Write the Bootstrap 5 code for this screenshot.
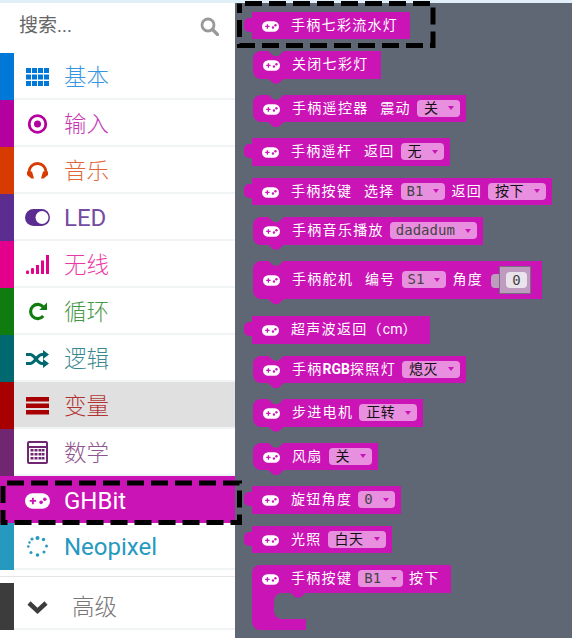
<!DOCTYPE html>
<html lang="zh">
<head>
  <meta charset="UTF-8">
  <title>GHBit toolbox</title>
  <link href="https://cdn.jsdelivr.net/npm/bootstrap@5.3.2/dist/css/bootstrap.min.css" rel="stylesheet">
  <style>
    html,body{height:100%}
    body{width:572px;height:638px;overflow:hidden;position:relative;background:#fff;font-family:Roboto,"Noto Sans CJK SC",sans-serif}
    .top-strip{height:3px;background:#e1f0f8}
    .side-pane{width:235px;flex:none;background:#fff}
    .search-box{height:50px;padding:0 16px 3px 19px;font-size:19px;color:#666}
    .cat-row{height:47px}
    .cat-bar{width:14px;flex:none}
    .cat-body{padding-left:12px;padding-top:2px;gap:15px;border-bottom:2px solid #f1f4f4;font-size:22.5px;line-height:1;font-weight:300}
    .cat-icon{width:23px;flex:none;display:block;overflow:visible}
    .cat-selected{background:#e0e0e0}
    .cat-active{background:#cb14b6;color:#fff}
    .cat-active .cat-body{border-bottom:0}
    .side-rule{border-bottom:1px solid #e3e6e6;margin-bottom:6px;height:7px}
    .adv-label{margin-left:8px;color:#777;padding-top:1px}
    .tint-basic{color:#0078d7}.tint-input{color:#b4009e}.tint-music{color:#d83b01}.tint-led{color:#5c2d91}
    .tint-radio{color:#e3008c}.tint-loop{color:#107c10}.tint-logic{color:#006970}.tint-var{color:#a80000}
    .tint-math{color:#712672}.tint-neo{color:#2699bf}.tint-adv{color:#3c3c3c}
    .fill-basic{background:#0078d7}.fill-input{background:#b4009e}.fill-music{background:#d83b01}.fill-led{background:#5c2d91}
    .fill-radio{background:#e3008c}.fill-loop{background:#107c10}.fill-logic{background:#006970}.fill-var{background:#a80000}
    .fill-math{background:#712672}.fill-neo{background:#2699bf}.fill-adv{background:#3c3c3c}
    .cat-text{opacity:.78;padding-top:2px}
    .cat-latin{font-size:24px;font-weight:400;padding-top:1px}
    .cat-led{opacity:.85}

    .fly-pane{background:#5f6775;padding:8.5px 0 0 17px;flex:1 1 auto;font-size:14px;color:#fff}
    .blk{position:relative;height:27.5px;background:#cb14b6;padding:0 12px 0 10px;gap:6px;white-space:nowrap}
    .blk-out{margin-bottom:12px}
    .blk-stmt{margin-bottom:16px;margin-left:1px;border-radius:8px 0 0 8px}
    .blk-tall{height:38.5px;margin-bottom:17px}
    .blk-out::before{content:"";position:absolute;left:-8px;top:6px;width:8px;height:14px;background:#cb14b6;border-radius:5px 0 0 5px}
    .blk-stmt::before{content:"";position:absolute;left:15px;top:0;width:16px;height:5px;background:#5f6775;clip-path:polygon(0 0,100% 0,65% 100%,35% 100%)}
    .blk-stmt::after{content:"";position:absolute;left:15px;top:100%;width:16px;height:5px;background:#cb14b6;clip-path:polygon(0 0,100% 0,65% 100%,35% 100%)}
    .blk-pad{width:17px;height:11px;flex:none;margin:2px 6px 0 0}
    .blk-label{letter-spacing:1.3px;word-spacing:7px}
    .blk-tight{letter-spacing:0}
    .blk-end{padding-right:6px}
    .fld{height:17px;background:#e98fdf;border-radius:4px;padding:0 5px 0 7px;color:#111;letter-spacing:.5px;line-height:17px}
    .fld-mono{padding-left:6px;color:#444;letter-spacing:0;font-family:"DejaVu Sans Mono","Noto Sans CJK SC",monospace}
    .fld-arrow{width:0;height:0;margin:0 1px 0 10px;border-left:3px solid transparent;border-right:3px solid transparent;border-top:4px solid #cb14b6;flex:none}
    .num-slot{position:relative;width:32px;height:28px;background:#bd9cc0;border:1px solid #77707c;padding:5px 3px 5px 6px;margin-left:10px}
    .num-slot::before{content:"";position:absolute;left:-9px;top:7px;width:8px;height:14px;background:#bd9cc0;border-radius:4px 0 0 4px}
    .num-val{height:100%;border-radius:4px;background:#ebe3ec;color:#444;font:14px/16px "DejaVu Sans Mono",monospace;text-align:center}
    .blk-cwrap{width:199px}
    .blk-chead{border-radius:8px 0 0 0}
    .blk-jaw{width:54px;height:37px;background:#cb14b6;border-radius:0 0 0 8px}
    .blk-mouth{position:relative;margin-left:22px;height:26px;background:#5f6775;border-radius:8px 0 0 8px}
    .blk-mouth::before{content:"";position:absolute;right:0;top:0;width:16px;height:5px;background:#cb14b6;clip-path:polygon(0 0,100% 0,65% 100%,35% 100%)}

    .dash-layer{position:absolute;left:0;top:0;pointer-events:none}
    .dash-line{fill:none;stroke:#000;stroke-width:5;stroke-dasharray:17 7}
  </style>
</head>
<body>

<svg width="0" height="0" class="position-absolute">
  <symbol id="pad" viewBox="0 0 24 15">
    <rect x="0" y="0" width="24" height="15" rx="7.5" fill="#fff"/>
    <path d="M4.5 6.5h2.2v-2.2h1.8v2.2h2.2v1.8h-2.2v2.2h-1.8v-2.2h-2.200z" fill="#cb14b6"/>
    <circle cx="15.500" cy="8.800" r="1.700" fill="#cb14b6"/>
    <circle cx="19" cy="5.800" r="1.700" fill="#cb14b6"/>
  </symbol>
</svg>

<div class="top-strip"></div>
<div class="d-flex" style="height:635px">
  <!-- categories -->
  <div class="side-pane d-flex flex-column">
    <div class="search-box d-flex align-items-center justify-content-between">
      <span>搜索...</span>
      <svg width="19" height="19" viewBox="0 0 19 19"><circle cx="8" cy="8" r="6" fill="none" stroke="#999" stroke-width="2.800"/><path d="M12.500 12.500l5 5" stroke="#999" stroke-width="3.200" stroke-linecap="round"/></svg>
    </div>

    <div class="cat-row d-flex">
      <div class="cat-bar fill-basic"></div>
      <div class="cat-body d-flex flex-grow-1 align-items-center tint-basic">
        <svg class="cat-icon" height="18" viewBox="0 0 23 18" fill="currentColor">
          <rect x="0" y="0" width="5" height="5"/><rect x="6" y="0" width="5" height="5"/><rect x="12" y="0" width="5" height="5"/><rect x="18" y="0" width="5" height="5"/>
          <rect x="0" y="6.500" width="5" height="5"/><rect x="6" y="6.500" width="5" height="5"/><rect x="12" y="6.500" width="5" height="5"/><rect x="18" y="6.500" width="5" height="5"/>
          <rect x="0" y="13" width="5" height="5"/><rect x="6" y="13" width="5" height="5"/><rect x="12" y="13" width="5" height="5"/><rect x="18" y="13" width="5" height="5"/>
        </svg>
        <span class="cat-text">基本</span>
      </div>
    </div>
    <div class="cat-row d-flex">
      <div class="cat-bar fill-input"></div>
      <div class="cat-body d-flex flex-grow-1 align-items-center tint-input">
        <svg class="cat-icon" height="20" viewBox="0 0 23 20" fill="currentColor">
          <circle cx="11.500" cy="10" r="8.300" fill="none" stroke="currentColor" stroke-width="2.800"/><circle cx="11.500" cy="10" r="3.500"/>
        </svg>
        <span class="cat-text">输入</span>
      </div>
    </div>
    <div class="cat-row d-flex">
      <div class="cat-bar fill-music"></div>
      <div class="cat-body d-flex flex-grow-1 align-items-center tint-music">
        <svg class="cat-icon" height="16" viewBox="0 0 23 16" fill="currentColor">
          <path d="M3 12v-3a8.500 8.500 0 0 1 17 0v3" fill="none" stroke="currentColor" stroke-width="2.800"/>
          <path d="M1 8.500h5l2 7h-2.500l-4.500-3.500zM22 8.500h-5l-2 7h2.500l4.500-3.500z"/>
        </svg>
        <span class="cat-text">音乐</span>
      </div>
    </div>
    <div class="cat-row d-flex">
      <div class="cat-bar fill-led"></div>
      <div class="cat-body d-flex flex-grow-1 align-items-center tint-led">
        <svg class="cat-icon" height="17" viewBox="0 0 25 17" fill="currentColor" style="margin-left:-1px;width:25px;margin-right:-1px">
          <rect x="0" y="0" width="25" height="17" rx="8.500"/><circle cx="17" cy="8.500" r="6.500" fill="#fff"/>
        </svg>
        <span class="cat-latin cat-led">LED</span>
      </div>
    </div>
    <div class="cat-row d-flex">
      <div class="cat-bar fill-radio"></div>
      <div class="cat-body d-flex flex-grow-1 align-items-center tint-radio">
        <svg class="cat-icon" height="19" viewBox="0 0 23 19" fill="currentColor">
          <rect x="0" y="15.500" width="3" height="3.500" rx="1"/><rect x="5" y="13" width="3" height="6" rx="1"/><rect x="10" y="10" width="3" height="9"/><rect x="15" y="5.500" width="3" height="13.500"/><rect x="20" y="0" width="3" height="19"/>
        </svg>
        <span class="cat-text">无线</span>
      </div>
    </div>
    <div class="cat-row d-flex">
      <div class="cat-bar fill-loop"></div>
      <div class="cat-body d-flex flex-grow-1 align-items-center tint-loop">
        <svg class="cat-icon" height="19" viewBox="0 0 23 20" fill="currentColor">
          <path d="M17.500 5.200a7.500 7.500 0 1 0 0 9.600" fill="none" stroke="currentColor" stroke-width="3.300"/>
          <path d="M21.500 0.500v8h-8z"/>
        </svg>
        <span class="cat-text">循环</span>
      </div>
    </div>
    <div class="cat-row d-flex">
      <div class="cat-bar fill-logic"></div>
      <div class="cat-body d-flex flex-grow-1 align-items-center tint-logic">
        <svg class="cat-icon" height="18" viewBox="0 0 23 18" fill="currentColor">
          <path d="M0 4.500h4c5 0 7 9 12 9h2M0 13.500h4c5 0 7-9 12-9h2" fill="none" stroke="currentColor" stroke-width="3"/>
          <path d="M17 0l6 4.500-6 4.500zM17 9l6 4.500-6 4.500z"/>
        </svg>
        <span class="cat-text">逻辑</span>
      </div>
    </div>
    <div class="cat-row d-flex cat-selected">
      <div class="cat-bar fill-var"></div>
      <div class="cat-body d-flex flex-grow-1 align-items-center tint-var">
        <svg class="cat-icon" height="18" viewBox="0 0 23 18" fill="currentColor">
          <rect x="0" y="0" width="23" height="4.500"/><rect x="0" y="6.500" width="23" height="4.500"/><rect x="0" y="13" width="23" height="4.500"/>
        </svg>
        <span class="cat-text">变量</span>
      </div>
    </div>
    <div class="cat-row d-flex">
      <div class="cat-bar fill-math"></div>
      <div class="cat-body d-flex flex-grow-1 align-items-center tint-math">
        <svg class="cat-icon" height="23" viewBox="0 0 23 23" fill="currentColor">
          <path fill-rule="evenodd" d="M3 0h17a2 2 0 0 1 2 2v19a2 2 0 0 1-2 2h-17a2 2 0 0 1-2-2v-19a2 2 0 0 1 2-2zM3 2v3h17v-3zM3 7v14h17v-14z"/>
          <rect x="4.500" y="8" width="3" height="2.500"/><rect x="8.500" y="8" width="3" height="2.500"/><rect x="12.500" y="8" width="3" height="2.500"/><rect x="16" y="8" width="2.500" height="2.500"/>
          <rect x="4.500" y="12" width="3" height="2.500"/><rect x="8.500" y="12" width="3" height="2.500"/><rect x="12.500" y="12" width="3" height="2.500"/><rect x="16" y="12" width="2.500" height="2.500"/>
          <rect x="4.500" y="16" width="3" height="2.500"/><rect x="8.500" y="16" width="3" height="2.500"/><rect x="12.500" y="16" width="3" height="2.500"/><rect x="16" y="16" width="2.500" height="2.500"/>
        </svg>
        <span class="cat-text">数学</span>
      </div>
    </div>
    <div class="cat-row d-flex cat-active">
      <div class="cat-bar"></div>
      <div class="cat-body d-flex flex-grow-1 align-items-center">
        <svg class="cat-icon" height="16" style="margin-left:-1px;width:25px;margin-right:-1px"><use href="#pad"/></svg>
        <span class="cat-latin">GHBit</span>
      </div>
    </div>
    <div class="cat-row d-flex">
      <div class="cat-bar fill-neo"></div>
      <div class="cat-body d-flex flex-grow-1 align-items-center tint-neo">
        <svg class="cat-icon" height="21" viewBox="0 0 23 21" fill="currentColor">
          <circle cx="11.500" cy="2" r="2"/><circle cx="17.500" cy="3.500" r="1.700"/><circle cx="20.500" cy="10" r="1.500"/><circle cx="18" cy="16" r="1.500"/><circle cx="11.500" cy="19" r="1.800"/><circle cx="5" cy="16.500" r="1.500"/><circle cx="2.300" cy="10.500" r="1.300"/><circle cx="3.500" cy="6.500" r="1.200"/><circle cx="6" cy="3" r="1.600"/>
        </svg>
        <span class="cat-latin">Neopixel</span>
      </div>
    </div>
    <div class="side-rule"></div>
    <div class="cat-row d-flex">
      <div class="cat-bar fill-adv"></div>
      <div class="cat-body d-flex flex-grow-1 align-items-center tint-adv">
        <svg class="cat-icon" height="14" viewBox="0 0 23 14"><path d="M3 3l8.500 8 8.500-8" fill="none" stroke="currentColor" stroke-width="4.500"/></svg>
        <span class="adv-label">高级</span>
      </div>
    </div>
  </div>

  <!-- blocks -->
  <div class="fly-pane d-flex flex-column align-items-start">
    <div class="blk blk-out d-flex align-items-center"><svg class="blk-pad"><use href="#pad"/></svg><span class="blk-label">手柄七彩流水灯</span></div>
    <div class="blk blk-stmt d-flex align-items-center"><svg class="blk-pad"><use href="#pad"/></svg><span class="blk-label">关闭七彩灯</span></div>
    <div class="blk blk-stmt blk-end d-flex align-items-center"><svg class="blk-pad"><use href="#pad"/></svg><span class="blk-label">手柄遥控器 震动</span><span class="fld d-flex align-items-center">关<i class="fld-arrow"></i></span></div>
    <div class="blk blk-out blk-end d-flex align-items-center"><svg class="blk-pad"><use href="#pad"/></svg><span class="blk-label">手柄遥杆 返回</span><span class="fld d-flex align-items-center">无<i class="fld-arrow"></i></span></div>
    <div class="blk blk-out blk-end d-flex align-items-center"><svg class="blk-pad"><use href="#pad"/></svg><span class="blk-label">手柄按键 选择</span><span class="fld fld-mono d-flex align-items-center">B1<i class="fld-arrow"></i></span><span class="blk-label">返回</span><span class="fld d-flex align-items-center">按下<i class="fld-arrow"></i></span></div>
    <div class="blk blk-stmt blk-end d-flex align-items-center"><svg class="blk-pad"><use href="#pad"/></svg><span class="blk-label">手柄音乐播放</span><span class="fld fld-mono d-flex align-items-center">dadadum<i class="fld-arrow"></i></span></div>
    <div class="blk blk-stmt blk-tall d-flex align-items-center" style="padding-right:11px"><svg class="blk-pad"><use href="#pad"/></svg><span class="blk-label">手柄舵机 编号</span><span class="fld fld-mono d-flex align-items-center">S1<i class="fld-arrow"></i></span><span class="blk-label">角度</span><div class="num-slot"><div class="num-val">0</div></div></div>
    <div class="blk blk-out d-flex align-items-center"><svg class="blk-pad"><use href="#pad"/></svg><span class="blk-label">超声波返回（<span class="blk-tight">cm</span>）</span></div>
    <div class="blk blk-stmt blk-end d-flex align-items-center"><svg class="blk-pad"><use href="#pad"/></svg><span class="blk-label">手柄<span class="blk-tight fw-bold">RGB</span>探照灯</span><span class="fld d-flex align-items-center">熄灭<i class="fld-arrow"></i></span></div>
    <div class="blk blk-stmt blk-end d-flex align-items-center"><svg class="blk-pad"><use href="#pad"/></svg><span class="blk-label">步进电机</span><span class="fld d-flex align-items-center">正转<i class="fld-arrow"></i></span></div>
    <div class="blk blk-stmt blk-end d-flex align-items-center"><svg class="blk-pad"><use href="#pad"/></svg><span class="blk-label">风扇</span><span class="fld d-flex align-items-center">关<i class="fld-arrow"></i></span></div>
    <div class="blk blk-out blk-end d-flex align-items-center"><svg class="blk-pad"><use href="#pad"/></svg><span class="blk-label">旋钮角度</span><span class="fld fld-mono d-flex align-items-center">0<i class="fld-arrow"></i></span></div>
    <div class="blk blk-out blk-end d-flex align-items-center"><svg class="blk-pad"><use href="#pad"/></svg><span class="blk-label">光照</span><span class="fld d-flex align-items-center">白天<i class="fld-arrow"></i></span></div>
    <div class="blk-cwrap">
      <div class="blk blk-chead blk-end d-flex align-items-center"><svg class="blk-pad"><use href="#pad"/></svg><span class="blk-label">手柄按键</span><span class="fld fld-mono d-flex align-items-center">B1<i class="fld-arrow"></i></span><span class="blk-label">按下</span></div>
      <div class="blk-jaw"><div class="blk-mouth"></div></div>
    </div>
  </div>
</div>

<!-- dashed highlight of the selected category and block -->
<svg class="dash-layer" width="572" height="638">
  <path class="dash-line" stroke-dashoffset="18.500" d="M239.500 3.500H433V45.500H239.500Z"/>
  <path class="dash-line" stroke-dashoffset="20" d="M3 483H239.500V522.500H3Z"/>
</svg>

<script src="https://cdn.jsdelivr.net/npm/bootstrap@5.3.2/dist/js/bootstrap.bundle.min.js"></script>
</body>
</html>
